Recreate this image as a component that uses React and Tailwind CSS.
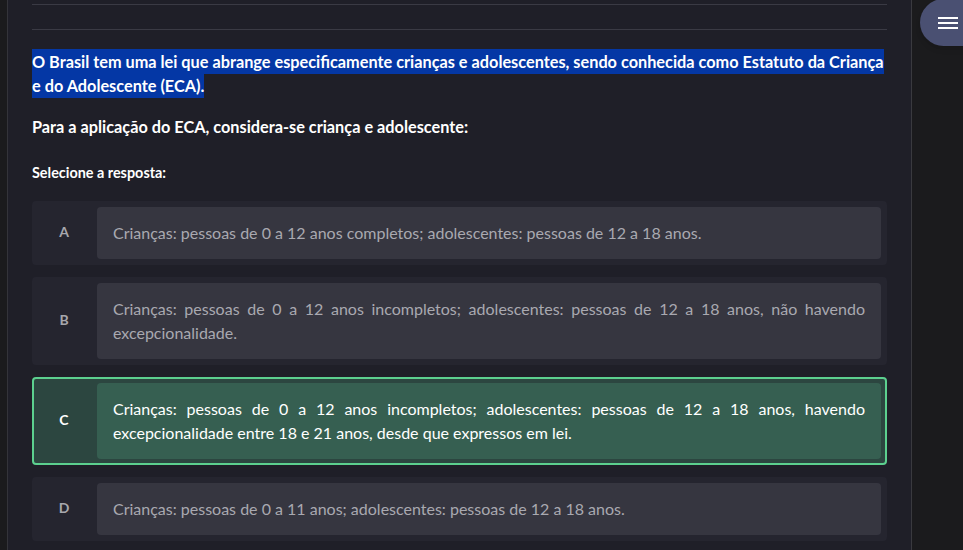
import React from "react";

const options = [
  {
    letter: "A",
    text: "Crianças: pessoas de 0 a 12 anos completos; adolescentes: pessoas de 12 a 18 anos.",
  },
  {
    letter: "B",
    text: "Crianças: pessoas de 0 a 12 anos incompletos; adolescentes: pessoas de 12 a 18 anos, não havendo excepcionalidade.",
  },
  {
    letter: "C",
    text: "Crianças: pessoas de 0 a 12 anos incompletos; adolescentes: pessoas de 12 a 18 anos, havendo excepcionalidade entre 18 e 21 anos, desde que expressos em lei.",
    selected: true,
  },
  {
    letter: "D",
    text: "Crianças: pessoas de 0 a 11 anos; adolescentes: pessoas de 12 a 18 anos.",
  },
];

const Option = ({ letter, text, selected }) => {
  return (
    <div
      className={`flex rounded-[4px] border-2 p-1 ${
        selected ? "border-[#5cd08f] bg-[#2c4640]" : "border-transparent bg-[#25252f]"
      }`}
    >
      <div
        className={`flex w-[59px] shrink-0 items-center justify-center pr-[7px] pb-[3px] text-[14px] font-bold ${
          selected ? "text-white" : "text-[#a7a7ad]"
        }`}
      >
        {letter}
      </div>
      <div
        className={`flex-1 rounded-[4px] px-4 py-[14px] text-justify text-[16px] leading-6 ${
          selected ? "bg-[#365f51] text-white" : "bg-[#363640] text-[#a9a9b0]"
        }`}
      >
        {text}
      </div>
    </div>
  );
};

export default function App() {
  return (
    <div className="flex h-[550px] w-[963px] overflow-hidden bg-[#1b1b1d] font-['Lato','Noto_Sans',sans-serif]">
      <div className="w-[7px] shrink-0" />
      <div className="w-px shrink-0 bg-[#34343a]" />

      <main className="w-[903px] shrink-0 bg-[#1f1f28] px-6 pt-1">
        <div className="border-t border-[#3a3a44]" />
        <div className="mt-6 border-t border-[#3a3a44]" />

        <p className="mt-5 text-[16.3px] font-bold leading-6 text-white">
          <span className="bg-[#0437a5] py-[3px] [box-decoration-break:clone]">
            O Brasil tem uma lei que abrange especificamente crianças e adolescentes, sendo conhecida como Estatuto da Criança e do Adolescente (ECA).
          </span>
        </p>

        <p className="mt-[17px] text-[16.3px] font-bold leading-6 text-white">
          Para a aplicação do ECA, considera-se criança e adolescente:
        </p>

        <p className="mt-6 text-[14.4px] font-bold leading-5 text-white">Selecione a resposta:</p>

        <div className="mt-[18px] flex flex-col gap-3">
          {options.map((o) => (
            <Option key={o.letter} {...o} />
          ))}
        </div>
      </main>

      <div className="w-px shrink-0 bg-[#3a3a3f]" />

      <aside className="relative flex-1">
        <button className="absolute left-2 top-[-1px] flex h-[47px] w-[70px] items-center rounded-l-full bg-[#4a5072] pl-[18px] shadow-md">
          <svg width="20" height="14" viewBox="0 0 20 14">
            <rect x="0" y="1" width="20" height="2" fill="white" />
            <rect x="0" y="6" width="20" height="2" fill="white" />
            <rect x="0" y="11" width="20" height="2" fill="white" />
          </svg>
        </button>
      </aside>
    </div>
  );
}
